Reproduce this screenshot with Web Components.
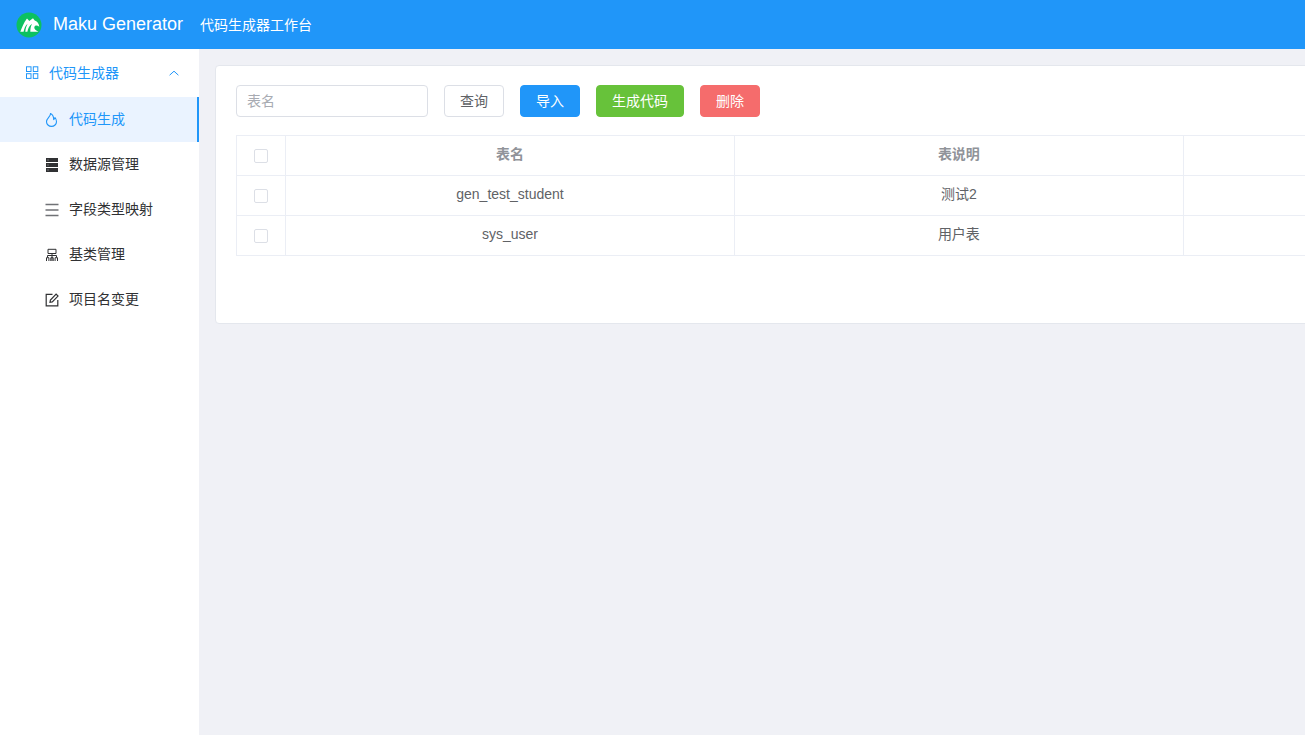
<!DOCTYPE html>
<html lang="zh-CN">
<head>
<meta charset="utf-8">
<title>Maku Generator</title>
<style>
  html, body { margin: 0; height: 100%; }
  body {
    --primary: #2096f9;
    --border: #dcdfe6;
    --line: #ebeef5;
    --text: #606266;
    font-family: "Liberation Sans", "Noto Sans CJK SC", sans-serif;
    font-size: 14px;
    color: var(--text);
  }
</style>
</head>
<body>
<maku-app>
  <maku-header slot="header" name="Maku Generator">代码生成器工作台</maku-header>
  <maku-menu slot="aside" label="代码生成器">
    <maku-menu-item icon="flame" active>代码生成</maku-menu-item>
    <maku-menu-item icon="server">数据源管理</maku-menu-item>
    <maku-menu-item icon="lines">字段类型映射</maku-menu-item>
    <maku-menu-item icon="tree">基类管理</maku-menu-item>
    <maku-menu-item icon="edit">项目名变更</maku-menu-item>
  </maku-menu>
  <maku-card>
    <maku-toolbar>
      <maku-input label="表名"></maku-input>
      <maku-button>查询</maku-button>
      <maku-button type="primary">导入</maku-button>
      <maku-button type="success">生成代码</maku-button>
      <maku-button type="danger">删除</maku-button>
    </maku-toolbar>
    <maku-table></maku-table>
  </maku-card>
</maku-app>

<script>
const define = (name, render, ready) => customElements.define(name, class extends HTMLElement {
  connectedCallback() {
    if (this.shadowRoot) return;
    const template = document.createElement('template');
    template.innerHTML = render(this);
    this.attachShadow({ mode: 'open' }).append(template.content.cloneNode(true));
    if (ready) ready(this);
  }
});

const icons = {
  grid: '<g fill="none" stroke="currentColor" stroke-width="1"><rect x="1.500" y=".8" width="4.500" height="4.700"/><rect x="8.300" y=".8" width="4.500" height="4.700"/><rect x="1.500" y="7.700" width="4.500" height="4.700"/><rect x="8.300" y="7.700" width="4.500" height="4.700"/></g>',
  flame: '<path fill="none" stroke="currentColor" stroke-width="1.100" stroke-linejoin="round" d="M5.500.5C5.800 3.600 1.500 5 1.500 8.700a5 4.700 0 0 0 10 0c0-1.700-.6-3.100-1.500-4.200-.1 1.100-.6 1.800-1.300 2.100C8.700 4 7.800 1.600 5.500.5Z"/>',
  server: '<path fill="currentColor" d="M1 0h12v4H1zM1 5h12v4H1zM1 10h12v4H1z"/><path stroke="#fff" stroke-width=".6" d="M2.500 2h1M2.500 7h1M2.500 12h1"/>',
  lines: '<path stroke="#707276" stroke-width="1.500" d="M.5 1.500h13M.5 7h13M.5 12.500h13"/>',
  tree: '<g fill="none" stroke="currentColor" stroke-width="1"><path d="M3 1.300h8v4.200H3zM7 5.500V13M2.500 9.500V7.500h9v2"/><path d="M1.500 13V9.700h2.400V13M10.100 13V9.700h2.400V13M5.800 13V9.700h2.400V13"/></g>',
  edit: '<g fill="none" stroke="currentColor" stroke-width="1.200"><path d="M7.500 1.300H1.200v11.500h11.600V7"/><path d="M5 9.300 5.400 7 11.100 1.200 13 3.100 7.300 8.900Z"/></g>',
  up: '<path fill="none" stroke="currentColor" stroke-width="1" d="m2.600 9.200 4.400-4 4.400 4"/>'
};
const icon = name => `<svg width="14" height="14" viewBox="0 0 14 14" aria-hidden="true">${icons[name]}</svg>`;

define('maku-app', () => `
  <style>
    :host { display: flex; flex-direction: column; min-height: 100vh; background: #f0f1f6; }
    .body { display: flex; flex: 1; }
    aside { flex: 0 0 199px; background: #fff; }
    main { flex: 1; min-width: 0; padding: 16px 0 16px 16px; overflow: hidden; }
  </style>
  <slot name="header"></slot>
  <div class="body">
    <aside><slot name="aside"></slot></aside>
    <main><slot></slot></main>
  </div>`);

define('maku-header', el => `
  <style>
    :host { display: block; color: #fff; background: var(--primary); }
    header { display: flex; align-items: center; height: 49px; padding-left: 16px; }
    svg { margin-right: 11px; }
    h1 { margin: 0 17px 0 0; padding-bottom: 2px; font-size: 18px; font-weight: 400; line-height: 24px; }
    .sub { padding-bottom: 2px; }
  </style>
  <header>
    <svg width="26" height="26" viewBox="0 0 26 26" aria-hidden="true">
      <circle cx="13" cy="13" r="12.500" fill="#0cc160"/>
      <path fill="#fff" d="M4.300 19.800C6 15.500 7.600 10.800 11 6.500L13.300 9 17 6.200 18.700 8.600C21 9.200 22.800 11.400 23.300 14.700 21.500 13 18.800 12.800 18.300 15 18 17.200 20 18.300 22.500 19.800H14.300C14.300 16.500 15 14 16 11.800 13.600 13.200 12 16.500 11.400 19.800H9.300C9.600 16.700 10.300 14.500 11.600 11.800 9.300 13.500 8.200 16.700 7.600 19.800Z"/>
    </svg>
    <h1>${el.getAttribute('name')}</h1>
    <span class="sub"><slot></slot></span>
  </header>`);

define('maku-menu', el => `
  <style>
    :host { display: block; }
    button { display: flex; align-items: center; gap: 10px; width: 100%; height: 48px; padding: 0 18px 0 25px;
      border: 0; background: none; font: inherit; color: var(--primary); text-align: left; }
    span { flex: 1; padding-bottom: 2px; }
  </style>
  <nav>
    <button type="button" aria-expanded="true">${icon('grid')}<span>${el.getAttribute('label')}</span>${icon('up')}</button>
    <slot></slot>
  </nav>`);

define('maku-menu-item', el => `
  <style>
    :host { display: block; color: #303133; }
    :host([active]) { color: var(--primary); background: #eaf3ff; border-right: 2px solid var(--primary); }
    a { display: flex; align-items: center; gap: 10px; height: 45px; padding-left: 45px; color: inherit; text-decoration: none; }
    span { padding-bottom: 3px; }
  </style>
  <a href="#">${icon(el.getAttribute('icon'))}<span><slot></slot></span></a>`);

define('maku-card', () => `
  <style>
    :host { display: block; box-sizing: border-box; width: 132%; padding: 19px 20px 67px;
      background: #fff; border: 1px solid #e4e7ed; border-radius: 4px; }
  </style>
  <slot></slot>`);

define('maku-toolbar', () => `
  <style>:host { display: flex; gap: 16px; margin-bottom: 18px; }</style>
  <slot></slot>`);

define('maku-input', el => `
  <style>
    :host { display: block; width: 192px; }
    input { display: block; box-sizing: border-box; width: 100%; height: 32px; padding: 0 10px;
      border: 1px solid var(--border); border-radius: 4px; font: inherit; color: var(--text); background: #fff; }
    input::placeholder { color: #a8abb2; }
  </style>
  <input type="text" placeholder="${el.getAttribute('label')}" aria-label="${el.getAttribute('label')}">`);

define('maku-button', () => `
  <style>
    :host { display: block; --fill: #fff; --edge: var(--border); --ink: var(--text); }
    :host([type=primary]) { --fill: var(--primary); --edge: var(--primary); --ink: #fff; }
    :host([type=success]) { --fill: #67c23a; --edge: #67c23a; --ink: #fff; }
    :host([type=danger]) { --fill: #f56c6c; --edge: #f56c6c; --ink: #fff; }
    button { display: block; height: 32px; padding: 0 15px 2px; border: 1px solid var(--edge); border-radius: 4px;
      font: inherit; color: var(--ink); background: var(--fill); }
  </style>
  <button type="button"><slot></slot></button>`);

const rows = [['gen_test_student', '测试2'], ['sys_user', '用户表']];
define('maku-table', () => `
  <style>
    :host { display: block; }
    table { width: 100%; table-layout: fixed; border-collapse: separate; border-spacing: 0;
      border-top: 1px solid var(--line); border-left: 1px solid var(--line); }
    th, td { box-sizing: border-box; height: 40px; padding: 0 0 4px; text-align: center; line-height: 24px;
      border-right: 1px solid var(--line); border-bottom: 1px solid var(--line); }
    th { font-weight: 700; color: #909399; }
    .check { width: 49px; padding: 0; }
    input { appearance: none; display: block; box-sizing: border-box; width: 14px; height: 14px; margin: 0 auto;
      border: 1px solid var(--border); border-radius: 2px; background: #fff; }
    input:checked { background: var(--primary); border-color: var(--primary); }
  </style>
  <table>
    <thead><tr><th class="check"><input type="checkbox" aria-label="全选"></th><th>表名</th><th>表说明</th><td></td></tr></thead>
    <tbody>${rows.map(([name, note]) => `
      <tr><td class="check"><input type="checkbox" aria-label="${name}"></td><td>${name}</td><td>${note}</td><td></td></tr>`).join('')}
    </tbody>
  </table>`,
  el => {
    const [all, ...boxes] = el.shadowRoot.querySelectorAll('input');
    all.addEventListener('change', () => boxes.forEach(box => { box.checked = all.checked; }));
  });
</script>
</body>
</html>
